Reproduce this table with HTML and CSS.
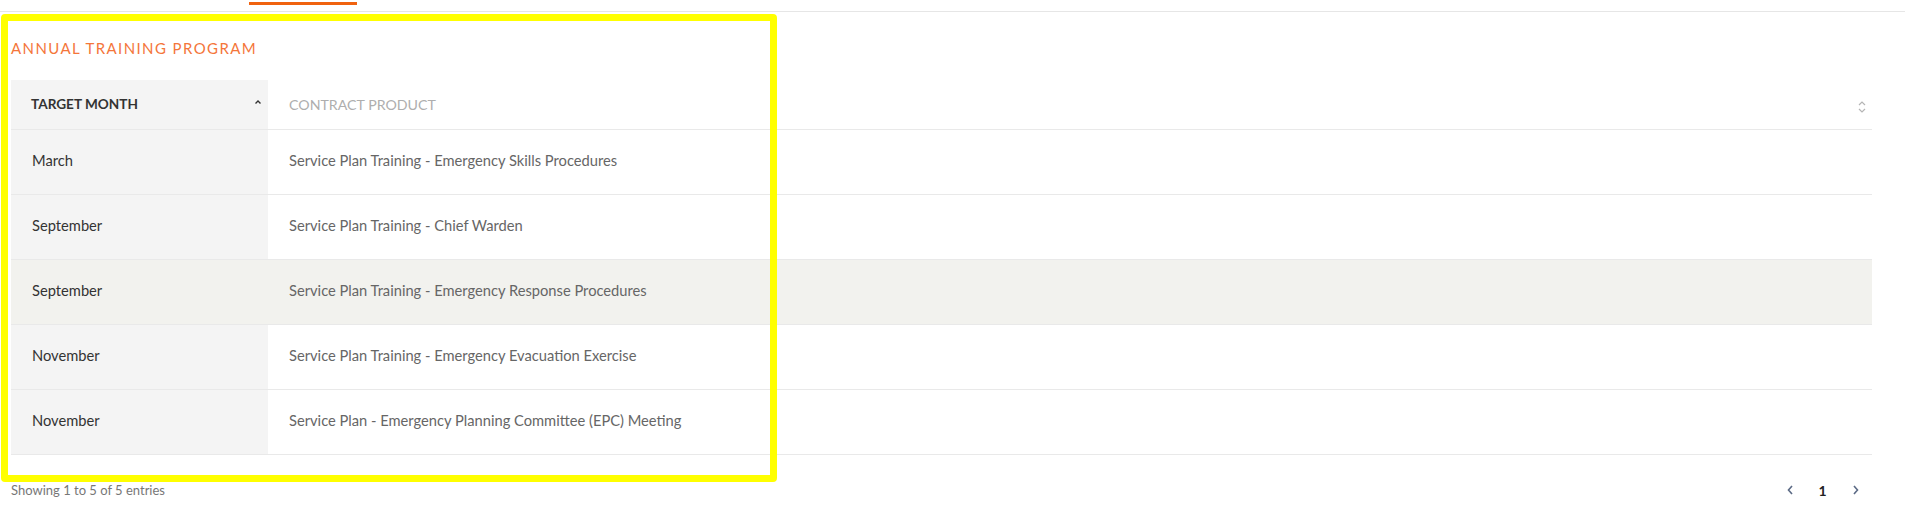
FILE: index.html
```html
<!DOCTYPE html>
<html>
<head>
<meta charset="utf-8">
<link rel="stylesheet" href="styles.css">
</head>
<body>
<div class="tabs"><div class="tab"></div></div>
<section class="panel">
  <h2 class="title">ANNUAL TRAINING PROGRAM</h2>
  <table class="grid">
    <thead>
      <tr>
        <th class="col-month"><span>TARGET MONTH</span>
          <svg class="sort-up" width="8" height="6" viewBox="0 0 8 6"><path d="M1.5 4.5 L4 2 L6.5 4.5" fill="none" stroke="#333" stroke-width="1.4"/></svg>
        </th>
        <th class="col-product"><span>CONTRACT PRODUCT</span>
          <svg class="sort-both" width="10" height="14" viewBox="0 0 10 14"><path d="M2 5 L5 2 L8 5 M2 9 L5 12 L8 9" fill="none" stroke="#b5b5b5" stroke-width="1.2"/></svg>
        </th>
      </tr>
    </thead>
    <tbody>
      <tr><td class="month">March</td><td class="product">Service Plan Training - Emergency Skills Procedures</td></tr>
      <tr><td class="month">September</td><td class="product">Service Plan Training - Chief Warden</td></tr>
      <tr class="striped"><td class="month">September</td><td class="product">Service Plan Training - Emergency Response Procedures</td></tr>
      <tr><td class="month">November</td><td class="product">Service Plan Training - Emergency Evacuation Exercise</td></tr>
      <tr><td class="month">November</td><td class="product">Service Plan - Emergency Planning Committee (EPC) Meeting</td></tr>
    </tbody>
  </table>
  <div class="footer">
    <div class="info">Showing 1 to 5 of 5 entries</div>
    <div class="pager">
      <span class="pg arrow"><svg width="8" height="12" viewBox="0 0 8 12"><path d="M6 2 L2.5 6 L6 10" fill="none" stroke="#5b6a85" stroke-width="1.6"/></svg></span>
      <span class="pg current">1</span>
      <span class="pg arrow"><svg width="8" height="12" viewBox="0 0 8 12"><path d="M2 2 L5.5 6 L2 10" fill="none" stroke="#5b6a85" stroke-width="1.6"/></svg></span>
    </div>
  </div>
</section>
<div class="highlight"></div>
</body>
</html>
```

FILE: styles.css
```css
html, body {
  margin: 0;
  padding: 0;
  background: #ffffff;
}
body {
  position: relative;
  font-family: Lato, "Open Sans", "Liberation Sans", sans-serif;
  color: #333;
  width: 1905px;
  height: 526px;
  overflow: hidden;
}
.tabs {
  height: 11px;
  border-bottom: 1px solid #e6e6e6;
  padding-left: 249px;
  box-sizing: content-box;
}
.tab {
  width: 108px;
  height: 2px;
  border-bottom: 3px solid #f0620f;
}
.panel {
  padding: 0 33px 0 11px;
}
.title {
  margin: 26px 0 22px;
  font-size: 15px;
  line-height: 20px;
  font-weight: 400;
  color: #f4763a;
  letter-spacing: 1.4px;
}
.grid {
  width: 100%;
  border-collapse: collapse;
  table-layout: fixed;
}
.grid th {
  height: 49px;
  padding: 0 10px 2px 20px;
  text-align: left;
  border-bottom: 1px solid #e9e9e9;
  position: relative;
  box-sizing: border-box;
}
.grid th.col-month {
  width: 257px;
  background: #f4f4f4;
  font-weight: 700;
  font-size: 13.6px;
  color: #333;
}
.grid th.col-product {
  font-weight: 400;
  font-size: 14.2px;
  color: #aeaeae;
  padding-left: 21px;
}
.grid th span {
  vertical-align: middle;
}
.sort-up {
  position: absolute;
  right: 6px;
  top: 19px;
}
.sort-both {
  position: absolute;
  right: 5px;
  top: 20px;
}
.grid td {
  height: 61px;
  padding: 0 10px 3px 21px;
  font-size: 14.7px;
  border-bottom: 1px solid #e9e9e9;
  box-sizing: content-box;
}
.grid td.month {
  background: #f4f4f4;
  color: #333;
  padding-left: 21px;
}
.grid td.product {
  color: #666;
}
.grid tr.striped td {
  background: #f2f2ee;
}
.footer {
  display: flex;
  justify-content: space-between;
  align-items: center;
  margin-top: 27px;
}
.info {
  font-size: 13px;
  color: #777;
}
.pager {
  display: flex;
  align-items: center;
}
.pg {
  width: 33px;
  display: flex;
  justify-content: center;
  align-items: center;
  font-size: 14px;
}
.pg.current {
  color: #222;
  font-weight: 700;
}
.highlight {
  position: absolute;
  left: 1px;
  top: 14px;
  width: 776px;
  height: 468px;
  box-sizing: border-box;
  border: 7px solid #ffff00;
  border-radius: 4px;
  pointer-events: none;
}
```
